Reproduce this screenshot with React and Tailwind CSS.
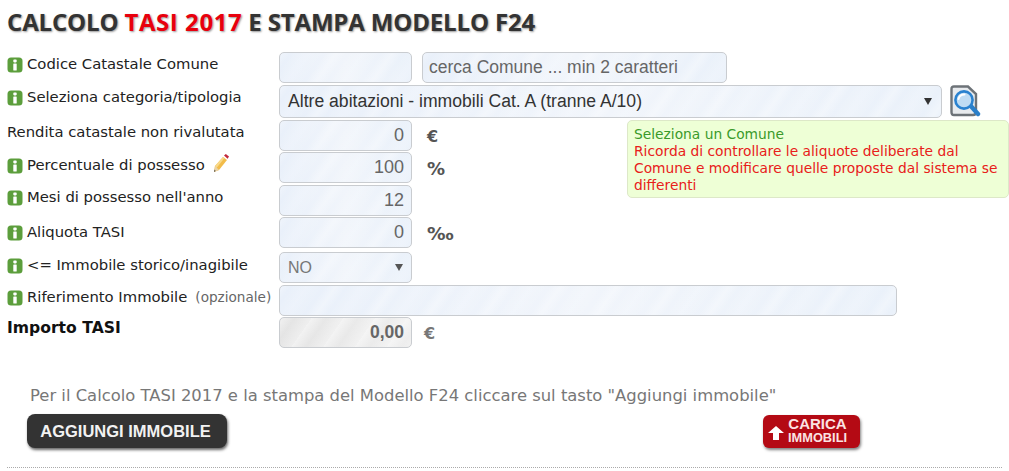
const tex = "bg-[repeating-linear-gradient(125deg,rgba(255,255,255,0.3)_0px,rgba(255,255,255,0)_9px,rgba(255,255,255,0.18)_22px,rgba(255,255,255,0)_37px,rgba(255,255,255,0.3)_46px),linear-gradient(90deg,#e9f0fa,#f1f5fb_50%,#eaf1fa)]";
const box = "h-[31px] rounded-[5px] border border-[#c9ccd0] flex items-center " + tex;

function Info() {
  return (
    <svg width="16" height="16" viewBox="0 0 16 16" className="shrink-0 mt-[2px]">
      <rect x="0.5" y="0.5" width="15" height="15" rx="3.5" fill="#5c9e3c" />
      <rect x="6.3" y="2.6" width="3.4" height="2.8" rx="0.8" fill="#fff" />
      <rect x="6.3" y="6.6" width="3.4" height="7" rx="0.5" fill="#fff" />
    </svg>
  );
}

function Pencil() {
  return (
    <svg width="18" height="20" viewBox="0 0 18 20" className="ml-[7px] -mt-[5px]">
      <path d="M11 4 L15 7 L7 17 L2 19 L3 13 Z" fill="#f2bc4a" />
      <path d="M3 13 L11 4 L12.5 5 L4.5 15 Z" fill="#f8d98a" />
      <path d="M12 2.6 L13.8 1 L17 3.4 L15.6 5.8 Z" fill="#c2293b" />
      <path d="M3 13 L7 17 L2 19 Z" fill="#e9d3a8" />
      <path d="M2.6 16.6 L3.6 18 L2 19 Z" fill="#444" />
    </svg>
  );
}

function Lens() {
  return (
    <svg width="31" height="33" viewBox="0 0 31 33">
      <path d="M4 1.5 H18 L26 9 V27 Q26 30 23 30 H4 Q1.5 30 1.5 27 V4 Q1.5 1.5 4 1.5 Z" fill="#e8ebee" stroke="#6d7378" strokeWidth="2.4" />
      <path d="M19 19 L28 29" stroke="#2a7fc9" strokeWidth="4.4" strokeLinecap="round" />
      <circle cx="14" cy="15" r="8.6" fill="#bfdcf3" stroke="#2a82cf" strokeWidth="2.6" />
      <path d="M8.5 14 Q9.5 9.5 14.5 9.5" fill="none" stroke="#fff" strokeWidth="2" strokeLinecap="round" />
    </svg>
  );
}

function Row({ top, info, children, field, label, labelTop = "" }) {
  return (
    <div className={"flex items-start " + top}>
      <div className={"w-[272px] shrink-0 flex items-center h-[24px] text-[14.8px] text-[#222] " + labelTop}>
        {info && <Info />}
        <span className={info ? "ml-[4px] flex items-center whitespace-nowrap" : "flex items-center whitespace-nowrap"}>{label}</span>
      </div>
      {field}
      {children}
    </div>
  );
}

function Num({ value }) {
  return <div className={box + " w-[133px] justify-end pr-[7px] text-[18px] text-[#666] font-['Liberation_Sans',sans-serif]"}>{value}</div>;
}

function Unit({ children, className = "ml-[15px] text-[16px] text-[#555] mt-[5px]" }) {
  return <span className={"font-bold " + className}>{children}</span>;
}

function Caret({ color = "#333" }) {
  return <svg width="8" height="7" viewBox="0 0 8 7" className="shrink-0"><path d="M0 0 H8 L4 7 Z" fill={color} /></svg>;
}

export default function App() {
  return (
    <div className="relative h-[471px] w-[1009px] overflow-hidden bg-white font-['DejaVu_Sans',sans-serif]">
      <h1 className="pl-[7px] pt-[6px] h-[52px] text-[24px] leading-[32px] font-bold tracking-[-0.15px] text-[#333] font-['Open_Sans',sans-serif] whitespace-nowrap [text-shadow:1px_1px_2px_#999]">
        CALCOLO <span className="text-[#e8000d] tracking-[0.55px]">TASI 2017</span> E STAMPA MODELLO F24
      </h1>

      <div className="pl-[7px] flex flex-col">
        <Row top="" info label="Codice Catastale Comune" field={<div className={box + " w-[133px]"} />}>
          <div className={box + " w-[305px] ml-[10px] pl-[6px] text-[17.5px] text-[#666] font-['Liberation_Sans',sans-serif]"}>cerca Comune ... min 2 caratteri</div>
        </Row>
        <Row top="mt-[2px]" info label="Seleziona categoria/tipologia" field={
          <div className={box + " !h-[33px] w-[663px] pl-[8px] pr-[9px] justify-between text-[17.6px] text-[#333] font-['Liberation_Sans',sans-serif]"}>
            <span>Altre abitazioni - immobili Cat. A (tranne A/10)</span><Caret />
          </div>}>
          <div className="ml-[8px]"><Lens /></div>
        </Row>
        <Row top="mt-[2px]" label="Rendita catastale non rivalutata" field={<Num value="0" />}>
          <Unit>€</Unit>
        </Row>
        <Row top="mt-[1px]" labelTop="mt-[1px]" info label={<>Percentuale di possesso<Pencil /></>} field={<Num value="100" />}>
          <Unit className="ml-[15px] text-[18px] text-[#555] mt-[3px]">%</Unit>
        </Row>
        <Row top="mt-[2px]" info label="Mesi di possesso nell'anno" field={<Num value="12" />} />
        <Row top="mt-[1px]" labelTop="mt-[3px]" info label="Aliquota TASI" field={<Num value="0" />}>
          <Unit className="ml-[15px] text-[18.5px] text-[#555] mt-[3px]">‰</Unit>
        </Row>
        <Row top="mt-[4px]" labelTop="mt-[1px]" info label="<= Immobile storico/inagibile" field={
          <div className={box + " w-[133px] pl-[8px] pr-[8px] justify-between text-[16px] text-[#777] font-['Liberation_Sans',sans-serif]"}>
            <span>NO</span><Caret color="#555" />
          </div>} />
        <Row top="mt-[2px]" info label={<>Riferimento Immobile <span className="ml-[8px] text-[13.6px] text-[#666]">(opzionale)</span></>} field={<div className={box + " w-[618px]"} />} />
        <Row top="mt-[1px]" label={<b className="text-[15.6px] text-[#111]">Importo TASI</b>} field={
          <div className={"h-[31px] w-[133px] rounded-[5px] border border-[#c9ccd0] flex items-center justify-end pr-[7px] text-[17.5px] font-bold text-[#666] font-['Liberation_Sans',sans-serif] bg-[repeating-linear-gradient(125deg,rgba(255,255,255,0.5)_0px,rgba(255,255,255,0)_12px,rgba(255,255,255,0.35)_26px),linear-gradient(90deg,#e4e4e4,#eee)]"}>0,00</div>}>
          <Unit className="ml-[12px] text-[16px] text-[#777] mt-[5px]">€</Unit>
        </Row>
      </div>

      <div className="absolute left-[627px] top-[120px] h-[78px] w-[382px] rounded-[5px] border border-[#dde8c8] bg-[#eeffd6] pl-[6px] pt-[5px] text-[13.8px] leading-[17px] text-[#e8201a]">
        <div className="text-[#3a9a2a]">Seleziona un Comune</div>
        Ricorda di controllare le aliquote deliberate dal Comune e modificare quelle proposte dal sistema se differenti
      </div>

      <p className="pl-[30px] mt-[38px] text-[16.4px] leading-[20px] text-[#777] whitespace-nowrap">
        Per il Calcolo TASI 2017 e la stampa del Modello F24 cliccare sul tasto "Aggiungi immobile"
      </p>

      <div className="mt-[8px] flex items-start">
        <div className="ml-[27px] flex h-[34px] w-[200px] items-center justify-center rounded-[8px] bg-[#333] pr-[3px] text-[16.5px] font-bold text-[#f2f2f2] font-['Liberation_Sans',sans-serif] shadow-[1px_2px_3px_rgba(0,0,0,0.6)]">
          AGGIUNGI IMMOBILE
        </div>
        <div className="ml-[536px] mt-[1px] flex h-[33px] w-[97px] items-center rounded-[6px] bg-[#b40a14] pl-[5px] text-[#fbe3e3] font-['Liberation_Sans',sans-serif] font-bold shadow-[1px_2px_3px_rgba(0,0,0,0.5)]">
          <svg width="16" height="14" viewBox="0 0 16 14" className="shrink-0 mt-[3px]"><path d="M8 0 L16 7 H11 V14 H5 V7 H0 Z" fill="#fff" /></svg>
          <div className="ml-[4px] pb-[3px] text-center">
            <div className="text-[15px] leading-[15px]">CARICA</div>
            <div className="text-[12.8px] leading-[13px]">IMMOBILI</div>
          </div>
        </div>
      </div>

      <div className="mx-[7px] mt-[19px] border-t border-dotted border-[#aaa]" />
    </div>
  );
}
